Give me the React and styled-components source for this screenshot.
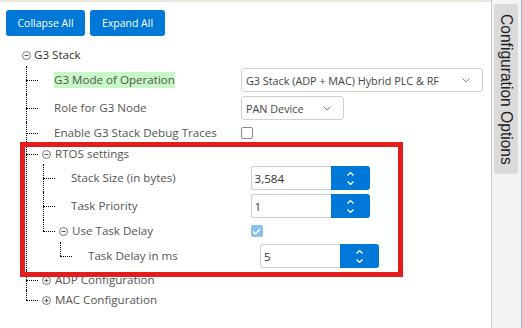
import styled, { createGlobalStyle } from 'styled-components';

const GlobalStyle = createGlobalStyle`
  html, body {
    margin: 0;
    padding: 0;
    background: #ffffff;
  }
  body {
    font-family: 'Open Sans', 'Noto Sans', sans-serif;
  }
  ul {
    list-style: none;
    margin: 0;
    padding: 0;
  }
`;

const BLUE = '#0078d7';

const Page = styled.div`
  display: flex;
  width: 522px;
  height: 328px;
  overflow: hidden;
`;

const Main = styled.div`
  position: relative;
  flex: 1;
  display: flex;
  flex-direction: column;
  border-top: 2px solid #ece8df;
  background: #fff;
`;

const Toolbar = styled.div`
  display: flex;
  gap: 5px;
  padding: 8px 0 0 6px;
`;

const ToolButton = styled.button`
  height: 26px;
  width: ${(p) => p.$w}px;
  border: none;
  border-radius: 3px;
  background: ${BLUE};
  color: #fff;
  font-family: 'Open Sans', sans-serif;
  font-size: 10.5px;
  padding: 0;
`;

const Tree = styled.ul`
  margin-top: 8px;
`;

const Item = styled.li`
  position: relative;

  /* dotted tree lines */
  &::before {
    content: '';
    position: absolute;
    left: 0;
    top: 0;
    height: ${(p) => (p.$last ? `${p.$h / 2}px` : '100%')};
    border-left: 1px dotted #000;
  }
  &::after {
    content: '';
    position: absolute;
    left: 0;
    top: ${(p) => p.$h / 2}px;
    width: 12px;
    border-top: 1px dotted #000;
  }
`;

const RootItem = styled.li``;

const Branch = styled.ul`
  margin-left: 17px;
`;

const RootBranch = styled.ul`
  margin-left: 26px;
`;

const Row = styled.div`
  display: flex;
  align-items: center;
  height: ${(p) => p.$h}px;
`;

const LabelCell = styled.div`
  display: flex;
  align-items: center;
  width: ${(p) => p.$w}px;
  flex-shrink: 0;
  padding-left: ${(p) => (p.$node ? 16 : 28)}px;
  box-sizing: border-box;
  gap: 4px;
`;

const Label = styled.span`
  font-size: 11.6px;
  color: ${(p) => (p.$dark ? '#333' : '#555')};
  background: ${(p) => (p.$hl ? '#c7f7c4' : 'transparent')};
  line-height: 16px;
  white-space: nowrap;
`;

const RootRow = styled.div`
  display: flex;
  align-items: center;
  gap: 3px;
  height: 22px;
  padding-left: 22px;
`;

const Select = styled.div`
  display: flex;
  align-items: center;
  justify-content: space-between;
  width: ${(p) => p.$w}px;
  height: 24px;
  box-sizing: border-box;
  border: 1px solid #cfcfcf;
  border-radius: 3px;
  padding: 0 12px 0 4px;
  font-size: 10.8px;
  color: #444;
  white-space: nowrap;
`;

const Check = styled.div`
  width: 12px;
  height: 12px;
  box-sizing: border-box;
  border-radius: 2px;
  border: ${(p) => (p.$on ? 'none' : '1px solid #8a8a8a')};
  background: ${(p) => (p.$on ? '#8cc0ec' : '#fff')};
  display: flex;
  align-items: center;
  justify-content: center;
`;

const Spinner = styled.div`
  display: flex;
  height: 24px;
`;

const SpinInput = styled.div`
  width: 80px;
  box-sizing: border-box;
  border: 1px solid #cfcfcf;
  border-right: none;
  border-radius: 3px 0 0 3px;
  padding-left: 3px;
  display: flex;
  align-items: center;
  font-size: 11.6px;
  color: #333;
`;

const SpinButton = styled.div`
  width: 39px;
  background: ${BLUE};
  border-radius: 0 3px 3px 0;
  display: flex;
  flex-direction: column;
  align-items: center;
  justify-content: center;
  gap: 5px;
`;

const Annotation = styled.div`
  position: absolute;
  left: 20px;
  top: 140px;
  width: 383px;
  height: 135px;
  box-sizing: border-box;
  border: 5px solid #e31c1c;
  pointer-events: none;
`;

const Sidebar = styled.div`
  width: 31px;
  border-left: 1px solid #c9c9c9;
  border-right: 1px solid #a9b8c8;
  background: #f3f3f3;
  padding: 4px 0 0 2px;
  box-sizing: border-box;
`;

const SideTab = styled.div`
  width: 24px;
  height: 170px;
  background: #dadada;
  border-radius: 3px;
  writing-mode: vertical-rl;
  display: flex;
  align-items: center;
  justify-content: center;
  font-family: 'Liberation Sans', Arial, sans-serif;
  font-size: 15.6px;
  color: #222;
`;

const ToggleIcon = ({ open }) => (
  <svg width="9" height="9" viewBox="0 0 9 9">
    <circle cx="4.5" cy="4.5" r="4" fill="none" stroke="#777" strokeWidth="1" />
    <line x1="2.5" y1="4.5" x2="6.5" y2="4.5" stroke="#555" strokeWidth="1" />
    {!open && <line x1="4.5" y1="2.5" x2="4.5" y2="6.5" stroke="#555" strokeWidth="1" />}
  </svg>
);

const Chevron = () => (
  <svg width="8" height="5" viewBox="0 0 8 5">
    <polyline points="0.5,0.5 4,4 7.5,0.5" fill="none" stroke="#888" strokeWidth="1" />
  </svg>
);

const Caret = ({ up }) => (
  <svg width="7" height="4" viewBox="0 0 7 4">
    <polyline
      points={up ? '0.5,3.5 3.5,0.5 6.5,3.5' : '0.5,0.5 3.5,3.5 6.5,0.5'}
      fill="none"
      stroke="#fff"
      strokeWidth="1.3"
    />
  </svg>
);

const CheckMark = () => (
  <svg width="9" height="7" viewBox="0 0 9 7">
    <polyline points="1,3.5 3.5,6 8,1" fill="none" stroke="#fff" strokeWidth="1.4" />
  </svg>
);

const Value = ({ value }) => {
  if (!value) return null;
  if (value.type === 'select')
    return (
      <Select $w={value.width}>
        <span>{value.text}</span>
        <Chevron />
      </Select>
    );
  if (value.type === 'check')
    return <Check $on={value.on}>{value.on && <CheckMark />}</Check>;
  return (
    <Spinner>
      <SpinInput>{value.text}</SpinInput>
      <SpinButton>
        <Caret up />
        <Caret />
      </SpinButton>
    </Spinner>
  );
};

const rowHeight = (node) => {
  if (!node.value) return 20;
  if (node.value.type === 'check') return 22;
  return 28;
};

const Node = ({ node, level, last }) => {
  const h = rowHeight(node);
  const isNode = !!node.children || node.collapsed;
  // value column drifts right a little with each level
  const labelWidth = 215 - (level - 1) * 7.5;
  return (
    <Item $last={last} $h={h}>
      <Row $h={h}>
        <LabelCell $w={labelWidth} $node={isNode}>
          {isNode && <ToggleIcon open={!node.collapsed} />}
          <Label $hl={node.highlight}>{node.label}</Label>
        </LabelCell>
        <Value value={node.value} />
      </Row>
      {node.children && (
        <Branch>
          {node.children.map((c, i) => (
            <Node key={c.label} node={c} level={level + 1} last={i === node.children.length - 1} />
          ))}
        </Branch>
      )}
    </Item>
  );
};

const g3Stack = [
  {
    label: 'G3 Mode of Operation',
    highlight: true,
    value: { type: 'select', width: 242, text: 'G3 Stack (ADP + MAC) Hybrid PLC & RF' },
  },
  { label: 'Role for G3 Node', value: { type: 'select', width: 103, text: 'PAN Device' } },
  { label: 'Enable G3 Stack Debug Traces', value: { type: 'check', on: false } },
  {
    label: 'RTOS settings',
    children: [
      { label: 'Stack Size (in bytes)', value: { type: 'spin', text: '3,584' } },
      { label: 'Task Priority', value: { type: 'spin', text: '1' } },
      {
        label: 'Use Task Delay',
        value: { type: 'check', on: true },
        children: [{ label: 'Task Delay in ms', value: { type: 'spin', text: '5' } }],
      },
    ],
  },
  { label: 'ADP Configuration', collapsed: true },
  { label: 'MAC Configuration', collapsed: true },
];

export default function App() {
  return (
    <>
      <GlobalStyle />
      <Page>
        <Main>
          <Toolbar>
            <ToolButton $w={79}>Collapse All</ToolButton>
            <ToolButton $w={75}>Expand All</ToolButton>
          </Toolbar>
          <Tree>
            <RootItem>
              <RootRow>
                <ToggleIcon open />
                <Label $dark>G3 Stack</Label>
              </RootRow>
              <RootBranch>
                {g3Stack.map((n, i) => (
                  <Node key={n.label} node={n} level={1} last={i === g3Stack.length - 1} />
                ))}
              </RootBranch>
            </RootItem>
          </Tree>
          <Annotation />
        </Main>
        <Sidebar>
          <SideTab>Configuration Options</SideTab>
        </Sidebar>
      </Page>
    </>
  );
}
